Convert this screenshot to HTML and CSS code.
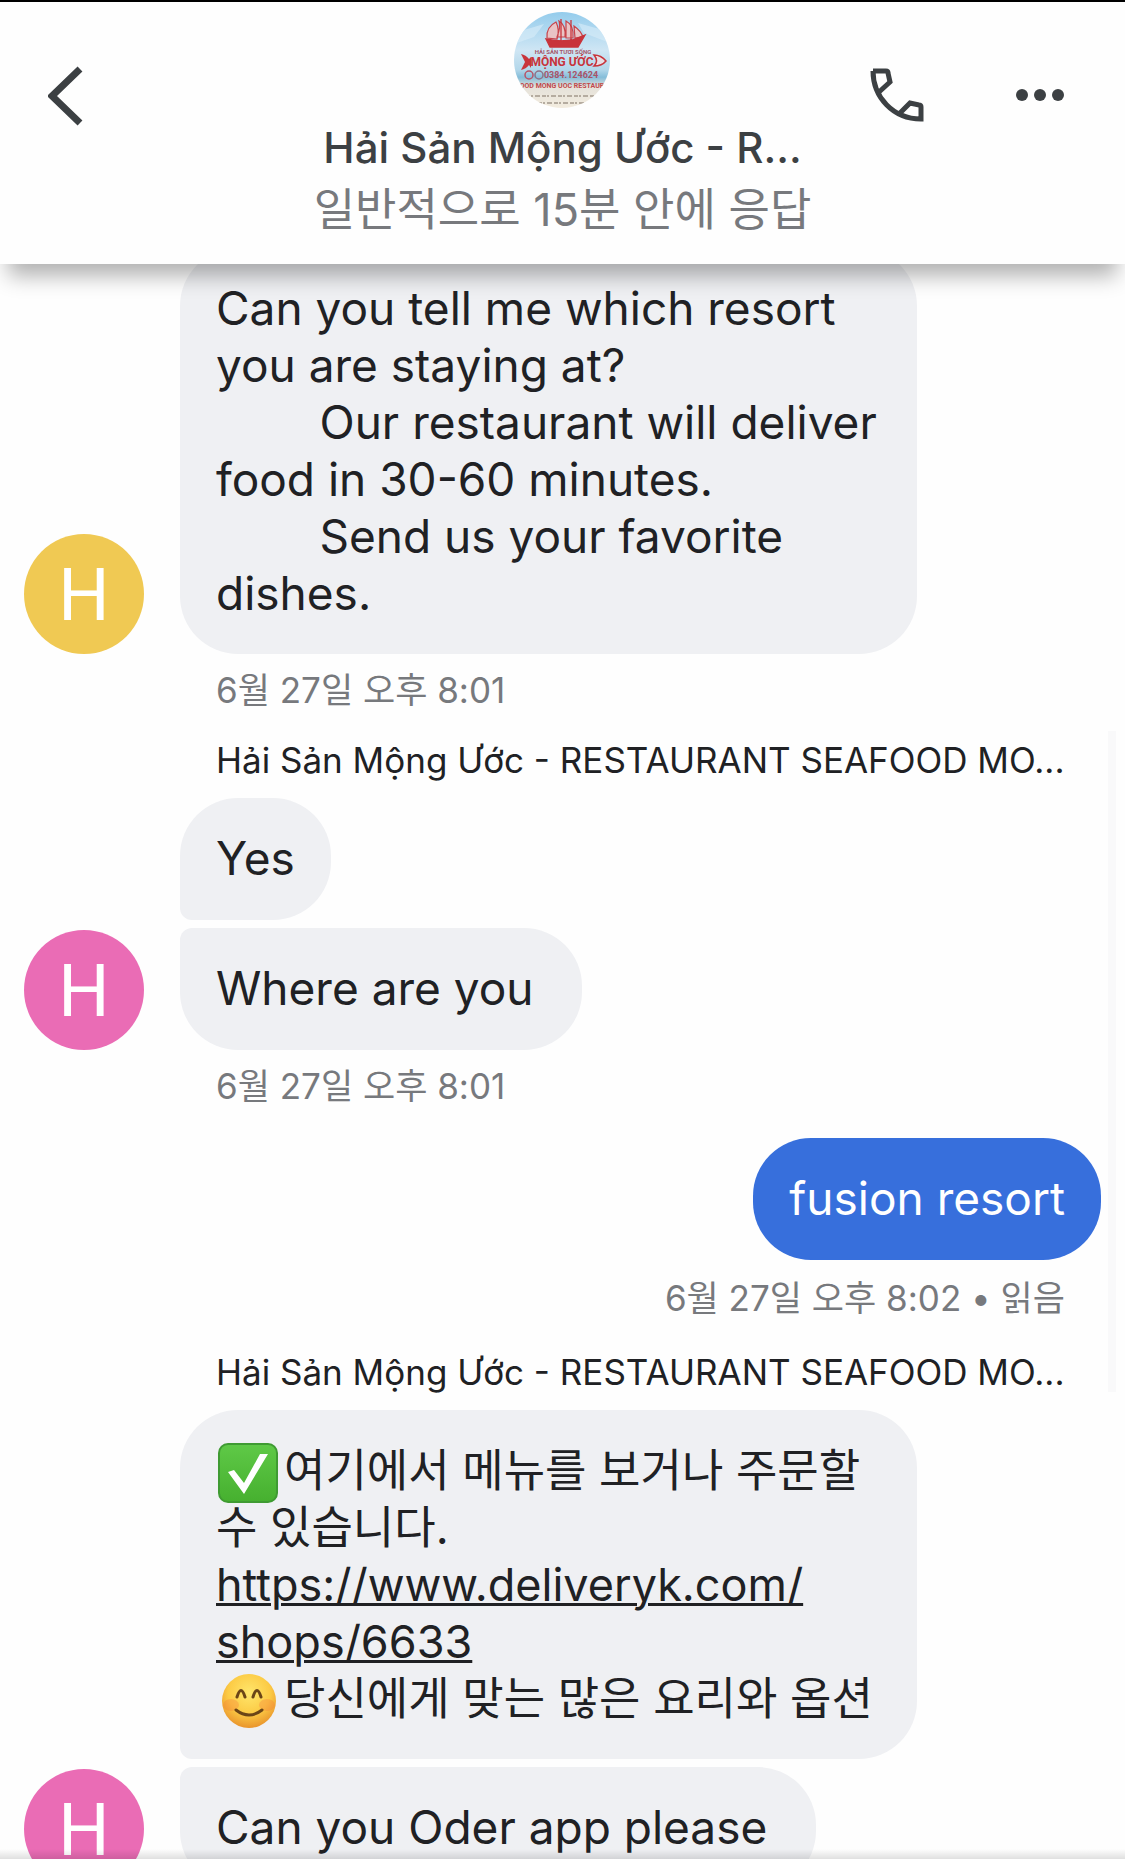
FILE: index.html
```
<!DOCTYPE html>
<html lang="ko">
<head>
    <meta charset="UTF-8">
    <meta name="viewport" content="width=device-width, initial-scale=1.0">
    <title>Hải Sản Mộng Ước</title>
    <link rel="stylesheet" href="styles.css">
</head>
<body>
    <header class="header">
        <button type="button" class="icon-button back" aria-label="뒤로">
            <svg width="36" height="64" viewBox="4 0 36 64"><path d="M36 5 8 32l28 27" fill="none" stroke="#3c4043" stroke-width="7"/></svg>
        </button>
        <div class="contact">
            <svg class="logo" width="96" height="96" viewBox="0 0 96 96" aria-hidden="true">
                <defs>
                    <linearGradient id="sea" x1="0" y1="0" x2="0" y2="1">
                        <stop offset="0" stop-color="#94ccec"/>
                        <stop offset=".4" stop-color="#cfe6f4"/>
                        <stop offset=".6" stop-color="#b3d7ea"/>
                        <stop offset=".68" stop-color="#85bdd9"/>
                        <stop offset=".78" stop-color="#e5e2da"/>
                        <stop offset="1" stop-color="#f3ecdf"/>
                    </linearGradient>
                    <clipPath id="round"><circle cx="48" cy="48" r="48"/></clipPath>
                </defs>
                <g clip-path="url(#round)">
                    <rect width="96" height="96" fill="url(#sea)"/>
                    <path d="M0 21 30 12 20 25 0 32zM64 11l32 9v11L70 21z" fill="#d9edf8" opacity=".6"/>
                    <path d="M33 26q-1-11 9-16 4 8 1 17zM43 25q4-10 2-16 7 4 6 16zM52 9q8 4 7 17h-7zM60 14q7 5 9 11l-8 1z" fill="#e9c4c5" stroke="#c8434a" stroke-width="1.2"/>
                    <path d="M32 27q12 3 26 1l13-5-7 12H36zM47 7v23M57 8v21" fill="#c8343b" stroke="#c8343b" stroke-width="1.3"/>
                    <text class="logo-text" x="49" y="42" font-size="6" fill="#a4566a">HẢI SẢN TƯƠI SỐNG</text>
                    <path d="M7 42q5 1 8 5l2-2v11l-2-3q-3 4-8 5l4-8z" fill="#c8343b"/>
                    <path d="M80 43q7 0 12 6-4 5-12 5 5-5 0-11z" fill="#e8dde3" stroke="#c8343b" stroke-width="1.5"/>
                    <text class="logo-text" x="48" y="54" font-size="12" fill="#c8343b">MỘNG ƯỚC</text>
                    <circle cx="15" cy="63" r="4" fill="none" stroke="#b85266" stroke-width="1.5"/>
                    <circle cx="25" cy="63" r="4" fill="none" stroke="#8e7187" stroke-width="1.5"/>
                    <text class="logo-text" x="57" y="66" font-size="9" fill="#a85368">0384.124624</text>
                    <text class="logo-text" x="48" y="76" font-size="7" fill="#c2494b">OOD MONG UOC RESTAUR</text>
                    <path d="M12 84h72M24 91h49" stroke="#b5aca0" stroke-width="2" stroke-dasharray="4 1 2 2 5 2"/>
                </g>
            </svg>
            <h1 class="contact-name">Hải Sản Mộng Ước - R...</h1>
            <p class="contact-status">일반적으로 15분 안에 응답</p>
        </div>
        <div class="actions">
            <button type="button" class="icon-button" aria-label="전화">
                <svg width="60" height="60" viewBox="0 0 60 60"><path d="M6 6h13q2 0 2 2l2 9L12 27M6 6c0 26 20 48 48 48V42q0-2-2-2l-9-2-11 11" fill="none" stroke="#3c4043" stroke-width="5"/></svg>
            </button>
            <button type="button" class="icon-button" aria-label="더보기">
                <svg width="50" height="60" viewBox="0 0 50 60" fill="#3c4043"><circle cx="7" cy="30" r="6"/><circle cx="25" cy="30" r="6"/><circle cx="43" cy="30" r="6"/></svg>
            </button>
        </div>
    </header>

    <main class="chat">
        <section class="group">
            <div class="row">
                <span class="avatar yellow">H</span>
                <div class="bubble">Can you tell me which resort you are staying at?
        Our restaurant will deliver food in 30-60 minutes.
        Send us your favorite dishes.</div>
            </div>
            <p class="time">6월 27일 오후 8:01</p>
        </section>

        <section class="group">
            <p class="sender">Hải Sản Mộng Ước - RESTAURANT SEAFOOD MO...</p>
            <div class="row">
                <div class="bubble first">Yes</div>
            </div>
            <div class="row">
                <span class="avatar pink">H</span>
                <div class="bubble last">Where are you&nbsp;</div>
            </div>
            <p class="time">6월 27일 오후 8:01</p>
        </section>

        <section class="group mine">
            <div class="row">
                <div class="bubble">fusion resort</div>
            </div>
            <p class="time">6월 27일 오후 8:02 • 읽음</p>
        </section>

        <section class="group">
            <p class="sender">Hải Sản Mộng Ước - RESTAURANT SEAFOOD MO...</p>
            <div class="row">
                <div class="bubble first korean"><svg class="emoji" viewBox="0 0 60 60" role="img" aria-label="체크"><defs><linearGradient id="green" x1="0" y1="0" x2="0" y2="1"><stop offset="0" stop-color="#5fc947"/><stop offset="1" stop-color="#46b02f"/></linearGradient></defs><rect x="1" y="1" width="58" height="58" rx="9" fill="url(#green)" stroke="#3f9b32" stroke-width="2"/><path d="m10 29 6-2 10 13L42 11h8L26 51z" fill="#fff"/></svg>여기에서 메뉴를 보거나 주문할 수 있습니다.
<a href="https://www.deliveryk.com/shops/6633">https://www.deliveryk.com/<wbr>shops/6633</a>
<svg class="emoji" viewBox="0 0 60 60" role="img" aria-label="미소"><defs><radialGradient id="face" cx=".5" cy=".35" r=".65"><stop offset="0" stop-color="#ffe66c"/><stop offset=".6" stop-color="#fccb45"/><stop offset="1" stop-color="#e9942c"/></radialGradient></defs><circle cx="31" cy="30" r="27" fill="url(#face)"/><ellipse cx="13" cy="34" rx="8" ry="6" fill="#f5733a" opacity=".3"/><ellipse cx="49" cy="34" rx="8" ry="6" fill="#f5733a" opacity=".3"/><path d="M19 26q4-13 8 0M35 26q4-13 8 0" fill="none" stroke="#6b4517" stroke-width="3" stroke-linecap="round"/><path d="M18 39q13 10 26 0" fill="none" stroke="#6b4517" stroke-width="3" stroke-linecap="round"/></svg>당신에게 맞는 많은 요리와 옵션</div>
            </div>
            <div class="row">
                <span class="avatar pink">H</span>
                <div class="bubble last">Can you Oder app please&nbsp;</div>
            </div>
        </section>
    </main>
</body>
</html>
```
FILE: styles.css
```
:root {
    --text-color: #202124;
    --icon-color: #3c4043;
    --muted-color: #77797d;
    --bubble-color: #eff0f3;
    --primary-color: #376fdc;
}
* {
    box-sizing: border-box;
}
body {
    margin: 0;
    height: 100vh;
    display: flex;
    flex-direction: column;
    overflow: hidden;
    background-color: #fefefe;
    color: var(--text-color);
    font-family: 'Inter', 'Noto Sans CJK KR', sans-serif;
}
h1, p {
    margin: 0;
    font-weight: 400;
}
.header {
    position: relative;
    z-index: 1;
    flex-shrink: 0;
    display: grid;
    grid-template-columns: 1fr auto 1fr;
    padding: 10px 48px 22px;
    border-top: 2px solid #000;
    background-color: #fefefe;
    box-shadow: 0 20px 20px -8px rgba(0, 0, 0, 0.3);
}
.icon-button {
    display: flex;
    padding: 0;
    border: none;
    background: none;
    cursor: pointer;
}
.back {
    align-self: start;
    justify-self: start;
    padding-top: 52px;
}
.contact {
    display: flex;
    flex-direction: column;
    align-items: center;
}
.logo-text {
    font-family: 'Liberation Sans Narrow', 'Roboto', sans-serif;
    font-weight: 700;
    text-anchor: middle;
}
.contact-name {
    margin-top: 10px;
    font-size: 42px;
    font-weight: 500;
    line-height: 60px;
    color: var(--icon-color);
}
.contact-status {
    font-size: 45px;
    line-height: 64px;
    color: var(--muted-color);
}
.actions {
    display: flex;
    align-items: flex-start;
    justify-content: flex-end;
    gap: 88px;
    padding: 53px 12px 0 0;
}
.chat {
    position: relative;
    flex: 1;
    min-height: 0;
    margin-top: -16px;
    padding: 0 24px;
    overflow: hidden;
}
/* scroll thumb */
.chat::before {
    content: '';
    position: absolute;
    top: 30%;
    right: 9px;
    width: 8px;
    height: 41%;
    background-color: #f9f9fa;
}
.chat::after {
    content: '';
    position: absolute;
    inset: auto 0 0;
    height: 10px;
    background: linear-gradient(transparent, rgba(0, 0, 0, 0.12));
}
.group {
    padding-left: 156px;
}
.row {
    display: flex;
    align-items: flex-end;
    margin-bottom: 8px;
}
.avatar {
    flex-shrink: 0;
    width: 120px;
    height: 120px;
    margin-left: -156px;
    margin-right: 36px;
    border-radius: 50%;
    color: #fff;
    font-family: 'Roboto', sans-serif;
    font-size: 72px;
    line-height: 124px;
    text-align: center;
}
.yellow {
    background-color: #f0c953;
}
.pink {
    background-color: #ea6cb5;
}
.bubble {
    min-height: 122px;
    max-width: 80%;
    padding: 32px 36px;
    border-radius: 58px;
    background-color: var(--bubble-color);
    font-size: 46px;
    line-height: 57px;
    white-space: pre-wrap;
}
.korean {
    font-size: 45px;
}
.first {
    border-bottom-left-radius: 12px;
}
.last {
    border-top-left-radius: 12px;
}
.bubble a {
    color: inherit;
    text-decoration-thickness: 3px;
}
.emoji {
    width: 60px;
    height: 60px;
    margin: -12px 6px -8px 2px;
    vertical-align: middle;
}
.time {
    padding: 2px 36px 0;
    font-size: 35px;
    line-height: 52px;
    color: var(--muted-color);
}
.sender {
    padding: 18px 0 12px 36px;
    font-size: 35px;
    line-height: 52px;
    white-space: nowrap;
}
.mine {
    padding-top: 26px;
    padding-bottom: 4px;
}
.mine .row {
    justify-content: flex-end;
    margin-bottom: 10px;
}
.mine .bubble {
    background-color: var(--primary-color);
    color: #fff;
}
.mine .time {
    text-align: right;
}
```
